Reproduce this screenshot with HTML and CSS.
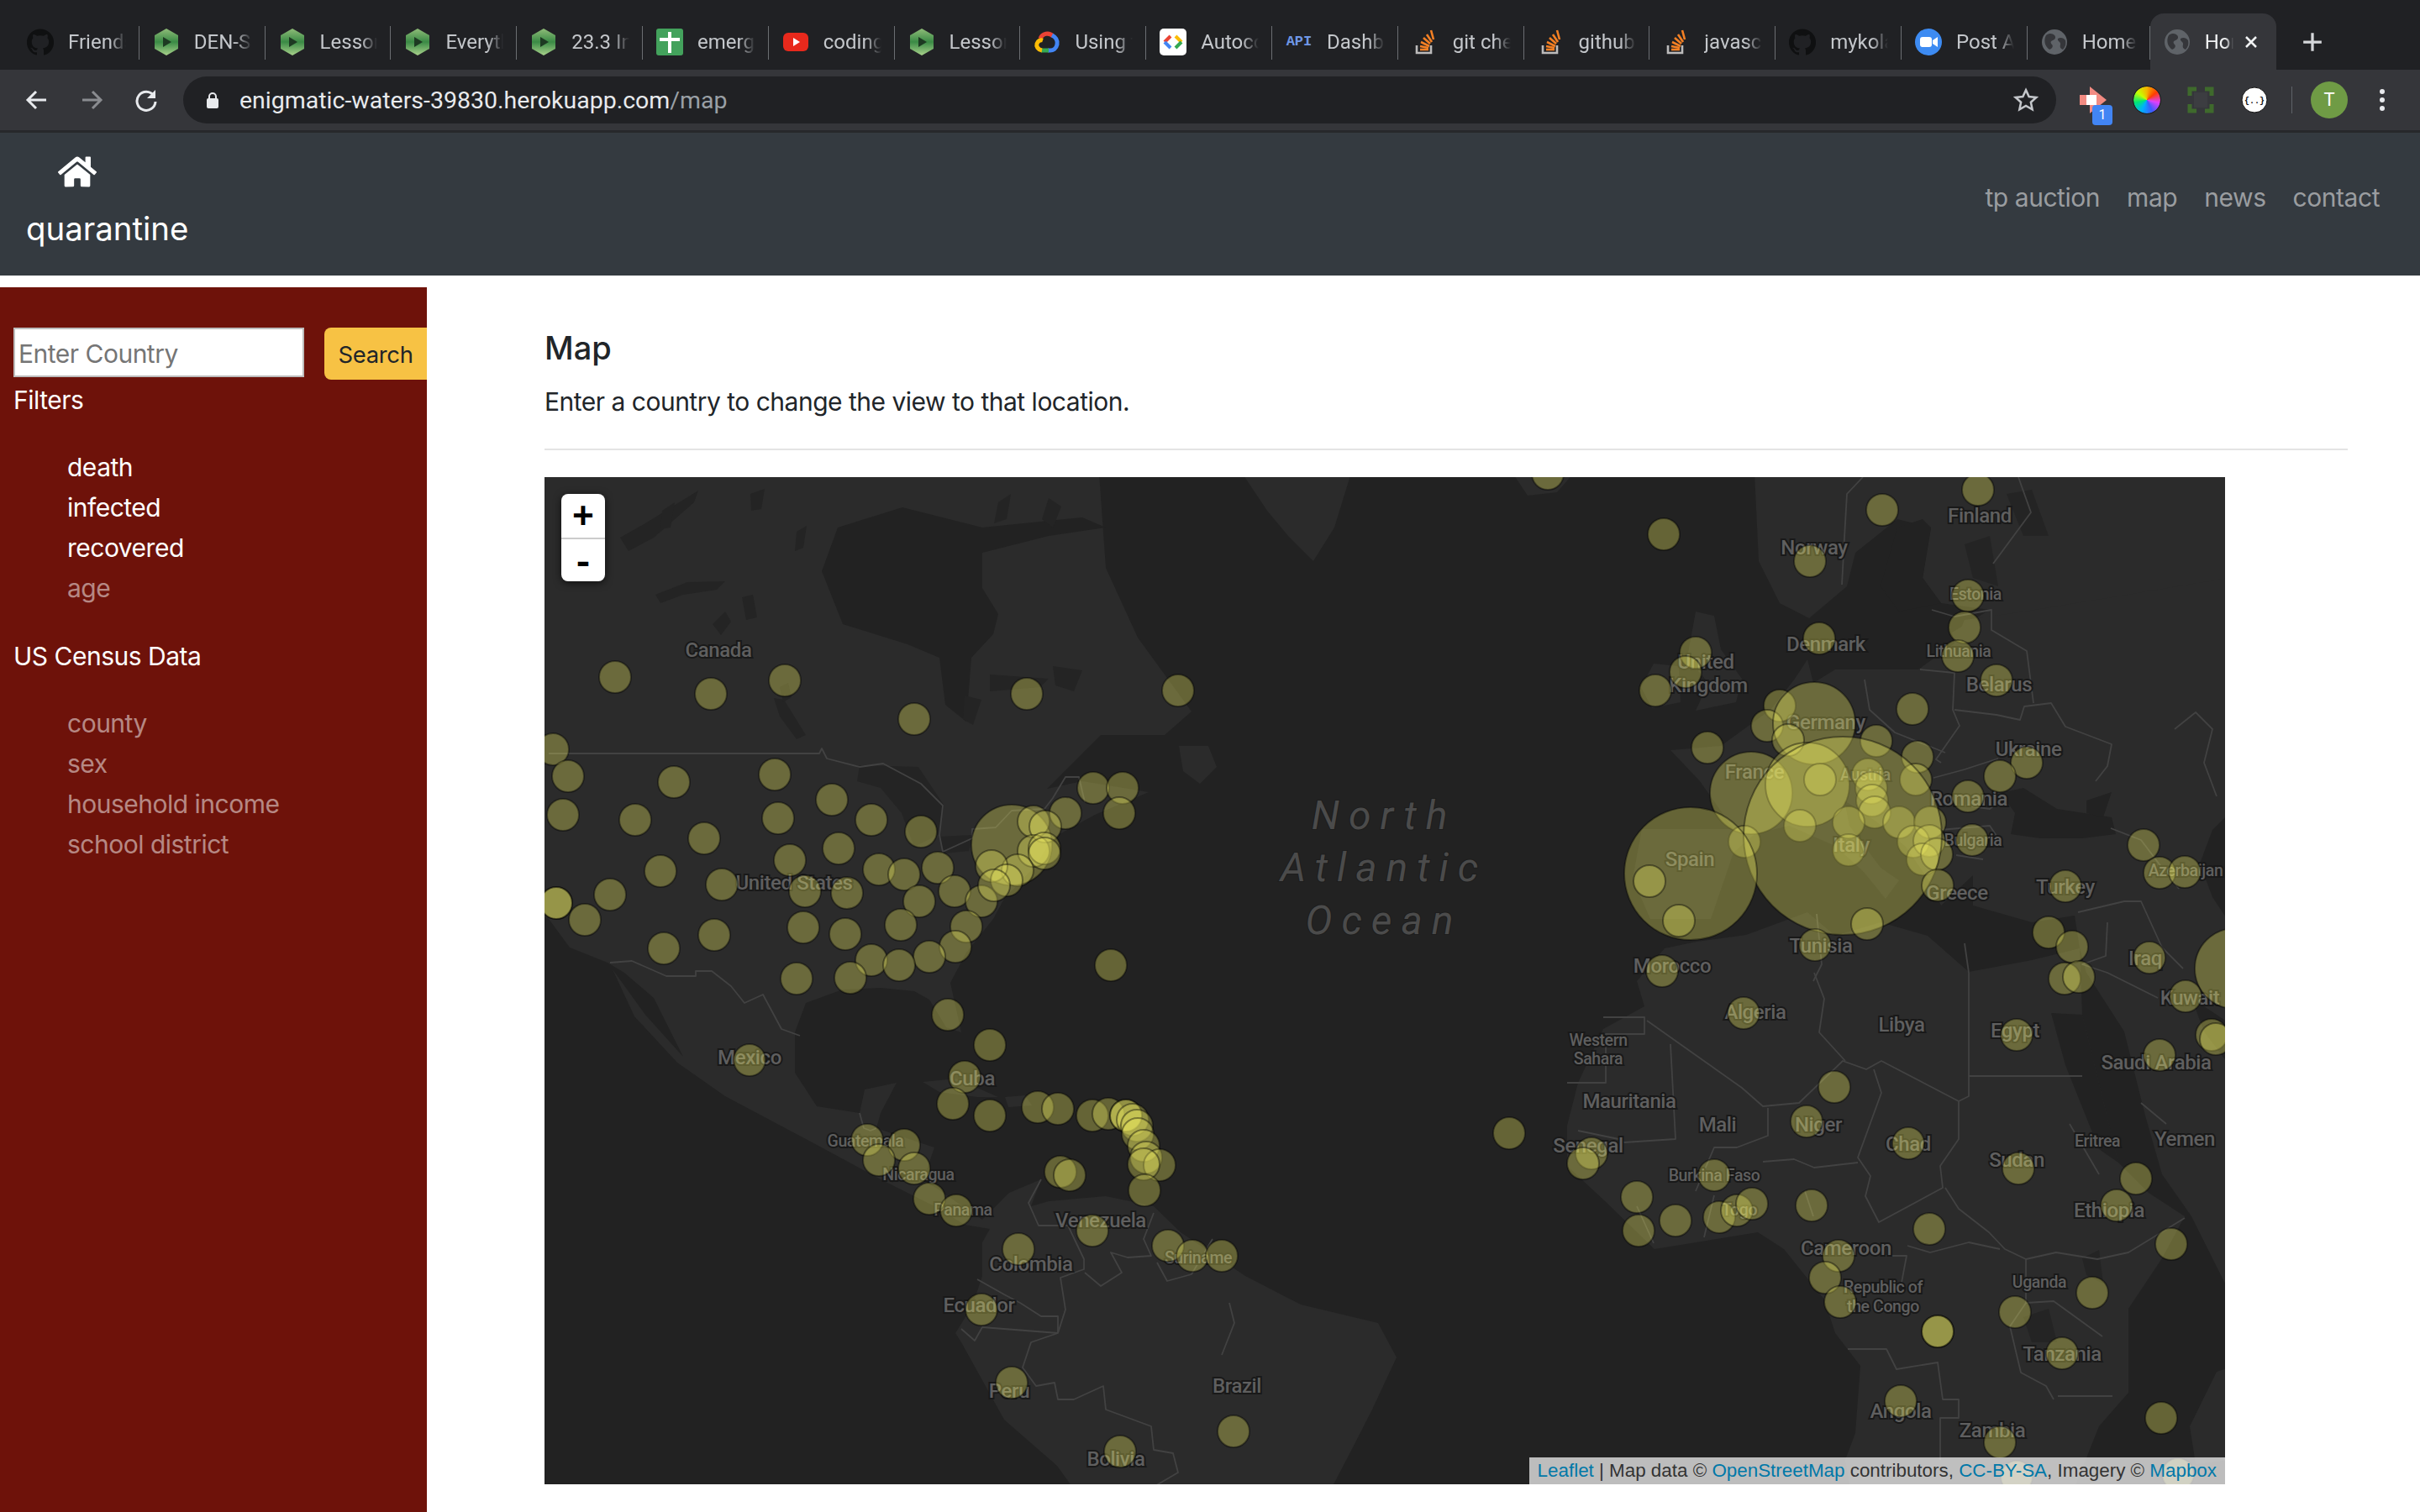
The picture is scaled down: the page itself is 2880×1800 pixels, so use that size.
FILE: index.html
```html
<!DOCTYPE html>
<html lang="en">
<head>
<meta charset="utf-8">
<title>Home</title>
<link rel="stylesheet" href="styles.css">
</head>
<body>
<svg class="defs" width="0" height="0">
  <defs>
    <linearGradient id="leaf" x1="0" y1="0" x2="0" y2="1">
      <stop offset="0" stop-color="#8fbc78"/><stop offset=".5" stop-color="#3a8a45"/><stop offset="1" stop-color="#a9d28c"/>
    </linearGradient>
    <symbol id="i-gh" viewBox="0 0 24 24"><path fill="#0f1011" d="M12 .3a12 12 0 0 0-3.8 23.4c.6.1.8-.3.8-.6v-2c-3.3.7-4-1.6-4-1.6-.6-1.4-1.4-1.8-1.4-1.8-1-.7.1-.7.1-.7 1.2 0 1.9 1.2 1.9 1.2 1 1.8 2.8 1.3 3.5 1 0-.8.4-1.3.7-1.6-2.7-.3-5.5-1.3-5.5-6 0-1.2.5-2.3 1.3-3.1-.2-.4-.6-1.6 0-3.2 0 0 1-.3 3.4 1.2a11.5 11.5 0 0 1 6 0c2.3-1.5 3.3-1.2 3.3-1.2.6 1.6.2 2.8 0 3.2.9.8 1.3 1.9 1.3 3.2 0 4.6-2.8 5.6-5.5 5.9.5.4.9 1 .9 2.2v3.3c0 .3.1.7.8.6A12 12 0 0 0 12 .3"/></symbol>
    <symbol id="i-hex" viewBox="0 0 32 32"><path fill="url(#leaf)" d="M16 0 30 8v16l-14 8-14-8V8z"/><path fill="#1d3a22" d="M12 10l10 6-10 6z"/></symbol>
    <symbol id="i-sheet" viewBox="0 0 32 32"><rect x="0" width="32" height="32" rx="3" fill="#43a25c"/><path fill="#fff" d="M14 4h4v7h10v4H18v14h-4V15H4v-4h10z"/></symbol>
    <symbol id="i-yt" viewBox="0 0 32 32"><rect x="1" y="5" width="30" height="22" rx="6" fill="#e8291c"/><path fill="#fff" d="M13 11l8 5-8 5z"/></symbol>
    <symbol id="i-gc" viewBox="0 0 32 32"><g fill="none" stroke-width="5"><path stroke="#ea4335" d="M8 12a9 9 0 0 1 15-3"/><path stroke="#4285f4" d="M22 8c4 2 7 6 6 11s-5 7-8 7h-3"/><path stroke="#34a853" d="M18 26H9"/><path stroke="#fbbc05" d="M10 26c-5-1-7-5-6-8s4-5 7-4"/></g></symbol>
    <symbol id="i-auto" viewBox="0 0 32 32"><rect width="32" height="32" rx="5" fill="#fff"/><path fill="none" stroke-width="4" stroke="#ea4335" d="M13 9l-7 7"/><path fill="none" stroke-width="4" stroke="#4285f4" d="M6 16l7 7"/><path fill="none" stroke-width="4" stroke="#fbbc05" d="M19 9l7 7"/><path fill="none" stroke-width="4" stroke="#34a853" d="M26 16l-7 7"/></symbol>
    <symbol id="i-so" viewBox="0 0 32 32"><path fill="none" stroke="#bcbbbb" stroke-width="2.6" d="M6 20v9h17v-9"/><g fill="none" stroke="#f48024" stroke-width="2.6"><path d="M10 25h10"/><path d="M10 21l10 2"/><path d="M11 16l10 5"/><path d="M14 11l8 7"/><path d="M18 7l6 9"/><path d="M23 2l3 11"/></g></symbol>
    <symbol id="i-zoom" viewBox="0 0 32 32"><circle cx="16" cy="16" r="16" fill="#3d8bf2"/><rect x="6" y="10" width="14" height="12" rx="3" fill="#fff"/><path fill="#fff" d="M21 14l6-4v12l-6-4z"/></symbol>
    <symbol id="i-globe" viewBox="0 0 32 32"><circle cx="16" cy="16" r="15" fill="#5f6368"/><path fill="#35363a" d="M6 8c4-3 8-2 10 0s1 5-2 6-3 3-1 5 0 5-3 6C4 21 3 13 6 8zm14 4c3-2 7-1 9 2 1 4 0 8-3 11-3-1-4-3-3-6s-4-4-3-7z"/></symbol>
    <symbol id="i-home" viewBox="0 0 576 512"><path fill="#fff" d="M280.37 148.26L96 300.11V464a16 16 0 0 0 16 16l112.06-.29a16 16 0 0 0 15.92-16V368a16 16 0 0 1 16-16h64a16 16 0 0 1 16 16v95.64a16 16 0 0 0 16 16.05L464 480a16 16 0 0 0 16-16V300L295.67 148.26a12.19 12.19 0 0 0-15.3 0zM571.6 251.47L488 182.56V44.05a12 12 0 0 0-12-12h-56a12 12 0 0 0-12 12v72.61L318.47 43a48 48 0 0 0-61 0L4.34 251.47a12 12 0 0 0-1.6 16.9l25.5 31A12 12 0 0 0 45.15 301l235.22-193.74a12.19 12.19 0 0 1 15.3 0L530.9 301a12 12 0 0 0 16.9-1.6l25.5-31a12 12 0 0 0-1.7-16.93z"/></symbol>
  </defs>
</svg>

<header class="chrome">
  <div class="tabs">
    <div class="tab"><svg class="fav"><use href="#i-gh"/></svg><span class="tab-title">Friends</span></div>
    <div class="tab"><svg class="fav"><use href="#i-hex"/></svg><span class="tab-title">DEN-SEI</span></div>
    <div class="tab"><svg class="fav"><use href="#i-hex"/></svg><span class="tab-title">Lessons</span></div>
    <div class="tab"><svg class="fav"><use href="#i-hex"/></svg><span class="tab-title">Everything</span></div>
    <div class="tab"><svg class="fav"><use href="#i-hex"/></svg><span class="tab-title">23.3 Intro</span></div>
    <div class="tab"><svg class="fav"><use href="#i-sheet"/></svg><span class="tab-title">emergency</span></div>
    <div class="tab"><svg class="fav"><use href="#i-yt"/></svg><span class="tab-title">coding tips</span></div>
    <div class="tab"><svg class="fav"><use href="#i-hex"/></svg><span class="tab-title">Lessons</span></div>
    <div class="tab"><svg class="fav"><use href="#i-gc"/></svg><span class="tab-title">Using the</span></div>
    <div class="tab"><svg class="fav"><use href="#i-auto"/></svg><span class="tab-title">Autocomplete</span></div>
    <div class="tab"><span class="fav fav-api">API</span><span class="tab-title">Dashboard</span></div>
    <div class="tab"><svg class="fav"><use href="#i-so"/></svg><span class="tab-title">git check</span></div>
    <div class="tab"><svg class="fav"><use href="#i-so"/></svg><span class="tab-title">github pull</span></div>
    <div class="tab"><svg class="fav"><use href="#i-so"/></svg><span class="tab-title">javascript</span></div>
    <div class="tab"><svg class="fav"><use href="#i-gh"/></svg><span class="tab-title">mykolaha</span></div>
    <div class="tab"><svg class="fav"><use href="#i-zoom"/></svg><span class="tab-title">Post Attendee</span></div>
    <div class="tab tab-short"><svg class="fav"><use href="#i-globe"/></svg><span class="tab-title">Home</span></div>
    <div class="tab tab-active"><svg class="fav"><use href="#i-globe"/></svg><span class="tab-title">Home</span>
      <svg class="tab-close" viewBox="0 0 16 16"><path d="M2 2l12 12M14 2L2 14"/></svg></div>
    <svg class="new-tab" viewBox="0 0 24 24"><path d="M12 2v20M2 12h20"/></svg>
  </div>
  <div class="toolbar">
    <svg class="tool tool-on" viewBox="0 0 28 28"><path d="M25 14H4M13 4L3 14l10 10"/></svg>
    <svg class="tool tool-off" viewBox="0 0 28 28"><path d="M3 14h21M15 4l10 10-10 10"/></svg>
    <svg class="tool tool-on" viewBox="0 0 28 28"><path d="M23 9a11 11 0 1 0 2 7"/><path class="solid" d="M25 2v10H15z"/></svg>
    <div class="omnibox">
      <svg class="lock" viewBox="0 0 16 20"><path fill="none" stroke="#e8eaed" stroke-width="2" d="M4 9V6a4 4 0 0 1 8 0v3"/><rect x="1" y="8" width="14" height="12" rx="2" fill="#e8eaed"/></svg>
      <span class="url">enigmatic-waters-39830.herokuapp.com<span class="url-path">/map</span></span>
      <svg class="star" viewBox="0 0 24 24"><path d="M12 2.5l2.9 6.3 6.9.8-5.1 4.6 1.4 6.8-6.1-3.4-6.1 3.4 1.4-6.8-5.1-4.6 6.9-.8z"/></svg>
    </div>
    <div class="exts">
      <span class="ext ext-flag"><svg viewBox="0 0 32 32"><path fill="#f28b82" d="M0 10h12V0l20 16-20 16V22H0z"/><rect x="8" y="10" width="12" height="12" fill="#fff"/></svg><b class="badge">1</b></span>
      <span class="ext ext-wheel"></span>
      <span class="ext"><svg viewBox="0 0 32 32"><path fill="none" stroke="#3f6a2c" stroke-width="5" d="M3 11V3h8M21 3h8v8M29 21v8h-8M11 29H3v-8"/><rect x="8" y="7" width="16" height="18" fill="#3c3d41"/></svg></span>
      <span class="ext"><svg viewBox="0 0 32 32"><circle cx="16" cy="16" r="15" fill="#fff" stroke="#111"/><text class="ext-json" x="16" y="20" text-anchor="middle">{..}</text></svg></span>
      <span class="tool-sep"></span>
      <span class="avatar">T</span>
      <span class="dots"><i></i><i></i><i></i></span>
    </div>
  </div>
</header>

<nav class="navbar">
  <div class="brand">
    <svg class="brand-icon"><use href="#i-home"/></svg>
    <span class="brand-name">quarantine</span>
  </div>
  <ul class="nav-links">
    <li>tp auction</li><li>map</li><li>news</li><li>contact</li>
  </ul>
</nav>

<div class="layout">
  <aside class="sidebar">
    <form class="search">
      <input class="search-input" type="text" placeholder="Enter Country">
      <button class="search-btn" type="button">Search</button>
    </form>
    <h2 class="side-head">Filters</h2>
    <ul class="side-list">
      <li class="on">death</li><li class="on">infected</li><li class="on">recovered</li><li>age</li>
    </ul>
    <h2 class="side-head side-head-2">US Census Data</h2>
    <ul class="side-list">
      <li>county</li><li>sex</li><li>household income</li><li>school district</li>
    </ul>
  </aside>
  <main class="content">
    <h1 class="title">Map</h1>
    <p class="lead">Enter a country to change the view to that location.</p>
    <hr class="rule">
    <div class="map">
      <svg class="map-svg" viewBox="0 0 2000 1200">
        <rect width="2000" height="1200" fill="#222222"/>
        <g class="land">
          <path d="M-5-5H660L668 108 706 191 770 279 738 307 662 307 598 371 640 362 719 375 655 402 604 430 585 462 547 502 534 526 502 566 483 602 496 661 478 655 458 622 440 612 400 608 355 610 311 626 298 661 298 709 324 749 375 757 381 729 419 721 400 757 395 775 464 798 451 836 521 884 553 852 591 836 579 868 600 862 668 856 725 868 757 899 834 951 900 985 992 1007 1014 1048 985 1110 961 1157 936 1205H630L610 1177 547 1122 496 1030 489 1019 509 987 521 951 521 911 530 895 500 890 464 868 400 836 311 788 215 737 158 697 107 642 81 586 120 640 165 690 130 620 95 590 75 578 30 560 5 526-5 520Z"/>
          <path d="M830-5H960L940 60 915 100 885 70 860 40Z"/>
          <path d="M755 320 790 320 800 345 780 365 760 350Z"/>
          <path d="M450 720 490 716 540 738 515 738 470 732Z"/>
          <path d="M548 738 572 736 580 748 552 750Z"/>
          <path d="M1152-5H1225L1205 18 1170 22Z"/>
          <path d="M1370 160 1392 165 1400 205 1425 240 1418 268 1370 278 1385 245 1360 215Z"/>
          <path d="M1320 222 1350 225 1352 268 1318 275 1305 250Z"/>
          <path d="M1440-5H1610V50 L1560 90 1550 130 1505 168 1470 150 1445 100Z"/>
          <path d="M1610-5H2005V300L1770 240 1680 205 1675 185 1720 158 1662 150 1640 120 1650 60 1610 50Z"/>
          <path d="M1306 419 1415 419 1375 362 1340 325 1400 320 1459 277 1488 240 1503 217 1510 245 1536 229 1635 229 1678 198 1690 170 1762 160 2005 120V1000L2000 960 1960 880 1925 830 1905 760 1880 660 1835 590 1827 561 1821 522 1770 530 1700 510 1700 474 1662 510 1646 478 1620 440 1585 410 1547 385 1553 415 1590 465 1612 480 1596 502 1570 470 1536 439 1481 415 1440 425 1415 447 1388 526 1316 526 1295 478Z"/>
          <path d="M1300 600 1333 561 1371 553 1430 545 1503 518 1536 546 1590 530 1646 546 1695 589 1770 575 1827 561 1830 640 1873 816 1909 852 1952 880 1925 930 1885 990 1885 1090 1850 1130 1820 1205H1554L1548 1170 1560 1138 1566 1058 1536 1019 1523 979 1475 919 1444 899 1321 919 1260 860 1217 820 1217 772 1230 721 1260 657 1309 630Z"/>
          <path d="M1990 1065 2005 1060V1170L1965 1175 1958 1130Z"/>
        </g>
        <g class="water">
          <path d="M349 60 426 36 521 60 640 48 668 60 600 70 521 90 521 132 540 163 534 187 508 215 502 291 477 271 470 215 432 199 355 175 330 112Z"/>
          <path d="M1733 376 1760 370 1800 395 1865 405 1870 425 1830 430 1780 430 1745 425 1750 400Z"/>
          <path d="M1835 385 1865 375 1855 405 1835 400Z"/>
          <path d="M1793 638 1830 640 1873 816 1850 800 1810 700Z"/>
          <path d="M1640 50 1650 60 1640 120 1662 150 1612 160 1590 130 1610 60Z"/>
          <path d="M1985 420 2005 400V530L1985 500 1970 460Z"/>
          <path d="M1960 620 2005 650V700L1975 660Z"/>
        </g>
        <g class="lakes">
          <path d="M90 72 120 55 183 16 178 30 130 72 100 88Z"/>
          <path d="M132 140 170 125 215 124 205 134 165 140 138 150Z"/>
          <path d="M235 143 248 140 253 167 240 170Z"/>
          <path d="M273 263 285 265 311 307 300 312 280 285Z"/>
          <path d="M140 40 155 30 150 60 138 62Z"/>
          <path d="M245 20 262 14 258 38 246 40Z"/>
          <path d="M300 65 312 58 308 84 298 88Z"/>
          <path d="M200 175 215 160 222 172 210 188Z"/>
          <path d="M280 250 290 245 294 262 284 268Z"/>
          <path d="M375 343 445 345 475 390 470 425 440 440 425 400 400 370 372 362Z"/>
          <path d="M470 428 510 426 505 445 475 448Z"/>
          <path d="M530 235 600 240 590 250 530 255Z"/>
          <path d="M605 225 640 230 630 255 608 248Z"/>
          <path d="M500 260 520 265 510 295 498 288Z"/>
          <path d="M540 30 555 20 550 50 535 55Z"/>
          <path d="M600 25 615 35 605 60 592 50Z"/>
          <path d="M1760 1000 1790 990 1800 1030 1770 1030Z"/>
          <path d="M1690 80 1720 70 1730 130 1700 120Z"/>
          <path d="M1740 20 1770 15 1790 70 1760 70Z"/>
          <path d="M1830 930 1850 920 1855 960 1835 950Z"/>
        </g>
        <g class="borders">
          <path d="M5 329H327L330 323 336 335 375 345 403 341 448 365 474 391 470 426 474 446 509 430 509 419 537 417 556 397 595 395 605 382 620 357 636 357 643 387"/>
          <path d="M78 578 104 576 145 594 180 594 180 588 199 588 222 606 238 626 260 616 282 657 304 665"/>
          <path d="M375 757 380 775 388 778 395 775"/>
          <path d="M591 836 576 864 588 891 623 891 642 931 642 943 614 953 620 991 611 1019 579 1030 569 1060 585 1082 607 1078 611 1098 630 1098 665 1082 668 1110 722 1130 725 1158 748 1162 754 1185 725 1202"/>
          <path d="M515 955 547 973 566 983 591 999 611 999 611 1019"/>
          <path d="M496 1014 512 1028 521 1012 611 1019"/>
          <path d="M725 876 713 907 722 927 694 929 674 923 687 947 662 963 643 947"/>
          <path d="M729 935 741 957 770 949 795 907"/>
          <path d="M815 983 821 1007 806 1045"/>
          <path d="M1260 643H1309V663H1263V721H1217"/>
          <path d="M1312 647 1425 727 1450 749 1493 745 1545 695 1573 705 1591 695 1683 743 1695 737V590"/>
          <path d="M1548 695 1517 661 1523 621 1511 590"/>
          <path d="M1695 713H1830"/>
          <path d="M1340 675 1346 788 1285 792 1278 788 1230 778"/>
          <path d="M1456 751V784L1419 798 1392 798 1370 850"/>
          <path d="M1450 815 1487 812 1511 822 1563 816"/>
          <path d="M1582 705 1591 733 1563 810 1578 832 1572 856 1588 887 1664 846 1661 820 1683 788 1683 743"/>
          <path d="M1667 846 1683 871 1719 899 1738 919 1763 931 1799 923 1848 931 1885 923 1952 882"/>
          <path d="M1590 927H1621L1615 959M1622 915 1649 923 1695 911 1732 919"/>
          <path d="M1763 931V983L1744 1011 1757 1066 1787 1082 1796 1098"/>
          <path d="M1763 983 1796 981 1854 1023"/>
          <path d="M1801 1094H1866"/>
          <path d="M1551 1038H1597L1609 1062 1658 1054 1664 1098H1683V1120H1661V1170"/>
          <path d="M1510 880 1500 850M1392 855 1380 905M1300 868 1320 912"/>
          <path d="M1815 770 1850 830M1900 745 1930 770"/>
          <path d="M1569 0 1550 20 1547 72 1544 128"/>
          <path d="M1754 0 1769 42 1724 103"/>
          <path d="M1651 158 1678 166 1722 158 1722 182 1764 207 1772 269"/>
          <path d="M1571 241 1577 277 1607 304 1667 328"/>
          <path d="M1637 229 1678 233 1676 277 1684 296 1656 336 1662 340"/>
          <path d="M1678 277 1728 283 1756 289 1761 273 1793 269 1810 297 1865 318 1860 344 1846 362"/>
          <path d="M1653 358 1690 348 1730 335M1650 385 1720 395 1740 380"/>
          <path d="M1660 420 1720 415 1730 430M1680 450 1712 455"/>
          <path d="M1864 418 1900 432 1925 465 1945 490"/>
          <path d="M1825 518 1880 505 1900 505 1925 560 1950 585"/>
          <path d="M1860 530 1858 570 1830 580 1860 590 1920 620"/>
          <path d="M1940 300 1965 280 1985 300 1975 340 1990 380"/>
          <path d="M1514 520 1520 580 1510 600M1690 555 1695 590"/>
        </g>
        <g class="labels">
          <text x="207" y="214">Canada</text>
          <text x="297" y="491">United States</text>
          <text x="1708" y="54">Finland</text>
          <text x="1511" y="92">Norway</text>
          <text class="s" x="1703" y="146">Estonia</text>
          <text x="1525" y="207">Denmark</text>
          <text x="1382" y="228">United</text>
          <text x="1385" y="256">Kingdom</text>
          <text class="s" x="1683" y="214">Lithuania</text>
          <text x="1731" y="255">Belarus</text>
          <text x="1525" y="300">Germany</text>
          <text x="1766" y="332">Ukraine</text>
          <text x="1440" y="359">France</text>
          <text class="s" x="1572" y="361">Austria</text>
          <text x="1695" y="391">Romania</text>
          <text class="s" x="1700" y="439">Bulgaria</text>
          <text x="1555" y="446">Italy</text>
          <text x="1363" y="463">Spain</text>
          <text x="1681" y="503">Greece</text>
          <text x="1810" y="496">Turkey</text>
          <text class="s" x="1953" y="475">Azerbaijan</text>
          <text x="1519" y="566">Tunisia</text>
          <text x="1342" y="590">Morocco</text>
          <text x="1905" y="581">Iraq</text>
          <text x="244" y="699">Mexico</text>
          <text x="509" y="724">Cuba</text>
          <text class="s" x="382" y="797">Guatemala</text>
          <text class="s" x="445" y="837">Nicaragua</text>
          <text class="s" x="498" y="879">Panama</text>
          <text x="662" y="893">Venezuela</text>
          <text x="579" y="945">Colombia</text>
          <text class="s" x="778" y="936">Suriname</text>
          <text x="517" y="994">Ecuador</text>
          <text x="553" y="1096">Peru</text>
          <text x="824" y="1090">Brazil</text>
          <text x="680" y="1177">Bolivia</text>
          <text x="1441" y="645">Algeria</text>
          <text x="1615" y="660">Libya</text>
          <text x="1750" y="667">Egypt</text>
          <text x="1958" y="628">Kuwait</text>
          <text class="s" x="1254" y="677">Western</text>
          <text class="s" x="1254" y="699">Sahara</text>
          <text x="1918" y="705">Saudi Arabia</text>
          <text x="1291" y="751">Mauritania</text>
          <text x="1396" y="779">Mali</text>
          <text x="1516" y="779">Niger</text>
          <text x="1242" y="804">Senegal</text>
          <text x="1623" y="802">Chad</text>
          <text x="1752" y="821">Sudan</text>
          <text class="s" x="1392" y="838">Burkina Faso</text>
          <text class="s" x="1848" y="797">Eritrea</text>
          <text x="1952" y="796">Yemen</text>
          <text class="s" x="1422" y="879">Togo</text>
          <text x="1862" y="881">Ethiopia</text>
          <text x="1549" y="926">Cameroon</text>
          <text class="s" x="1593" y="971">Republic of</text>
          <text class="s" x="1593" y="994">the Congo</text>
          <text class="s" x="1779" y="965">Uganda</text>
          <text x="1806" y="1052">Tanzania</text>
          <text x="1614" y="1120">Angola</text>
          <text x="1723" y="1143">Zambia</text>
          <text class="sea" x="999" y="419">North</text>
          <text class="sea" x="999" y="481">Atlantic</text>
          <text class="sea" x="999" y="544">Ocean</text>
        </g>
        <g class="dots">
          <circle cx="84" cy="238" r="19"/><circle cx="198" cy="258" r="19"/><circle cx="286" cy="242" r="19"/><circle cx="440" cy="288" r="19"/><circle cx="574" cy="258" r="19"/><circle cx="754" cy="254" r="19"/>
          <circle cx="10" cy="324" r="19"/><circle cx="28" cy="356" r="19"/><circle cx="154" cy="363" r="19"/><circle cx="274" cy="354" r="19"/><circle cx="342" cy="384" r="19"/><circle cx="22" cy="402" r="19"/>
          <circle cx="108" cy="408" r="19"/><circle cx="278" cy="406" r="19"/><circle cx="389" cy="408" r="19"/><circle cx="448" cy="422" r="19"/><circle cx="190" cy="430" r="19"/><circle cx="350" cy="442" r="19"/>
          <circle cx="292" cy="456" r="19"/><circle cx="398" cy="467" r="19"/><circle cx="428" cy="473" r="19"/><circle cx="468" cy="465" r="19"/><circle cx="138" cy="469" r="19"/><circle cx="211" cy="485" r="19"/>
          <circle cx="78" cy="497" r="19"/><circle cx="14" cy="507" r="19"/><circle cx="14" cy="507" r="19"/><circle cx="48" cy="527" r="19"/><circle cx="310" cy="493" r="19"/><circle cx="360" cy="495" r="19"/>
          <circle cx="488" cy="493" r="19"/><circle cx="446" cy="505" r="19"/><circle cx="520" cy="505" r="19"/><circle cx="308" cy="536" r="19"/><circle cx="358" cy="544" r="19"/><circle cx="424" cy="533" r="19"/>
          <circle cx="502" cy="535" r="19"/><circle cx="202" cy="545" r="19"/><circle cx="142" cy="561" r="19"/><circle cx="489" cy="559" r="19"/><circle cx="458" cy="571" r="19"/><circle cx="389" cy="575" r="19"/>
          <circle cx="422" cy="581" r="19"/><circle cx="300" cy="597" r="19"/><circle cx="364" cy="596" r="19"/><circle cx="674" cy="581" r="19"/><circle cx="620" cy="400" r="19"/><circle cx="653" cy="370" r="19"/>
          <circle cx="688" cy="370" r="19"/><circle cx="684" cy="400" r="19"/>
          <circle cx="556" cy="438" r="48"/><circle cx="582" cy="410" r="19"/><circle cx="596" cy="416" r="19"/><circle cx="582" cy="445" r="19"/><circle cx="595" cy="442" r="19"/><circle cx="595" cy="448" r="19"/><circle cx="563" cy="468" r="19"/><circle cx="532" cy="463" r="19"/><circle cx="550" cy="480" r="19"/><circle cx="535" cy="486" r="19"/>

          <circle cx="1194" cy="-4" r="19"/><circle cx="1706" cy="15" r="19"/><circle cx="1592" cy="39" r="19"/><circle cx="1332" cy="68" r="19"/><circle cx="1506" cy="100" r="19"/><circle cx="1694" cy="141" r="19"/>
          <circle cx="1690" cy="179" r="19"/><circle cx="1682" cy="213" r="19"/><circle cx="1517" cy="192" r="19"/><circle cx="1370" cy="209" r="19"/><circle cx="1358" cy="232" r="19"/><circle cx="1322" cy="254" r="19"/>
          <circle cx="1728" cy="242" r="19"/><circle cx="1628" cy="276" r="19"/><circle cx="1470" cy="272" r="19"/><circle cx="1455" cy="296" r="19"/><circle cx="1511" cy="293" r="49"/><circle cx="1480" cy="313" r="19"/>
          <circle cx="1585" cy="314" r="19"/><circle cx="1634" cy="333" r="19"/><circle cx="1764" cy="340" r="19"/><circle cx="1732" cy="356" r="19"/><circle cx="1384" cy="322" r="19"/><circle cx="1632" cy="360" r="19"/>
          <circle cx="1694" cy="380" r="19"/><circle cx="1436" cy="376" r="49"/><circle cx="1503" cy="366" r="50"/><circle cx="1518" cy="360" r="19"/><circle cx="1575" cy="354" r="19"/><circle cx="1579" cy="370" r="19"/>
          <circle cx="1580" cy="385" r="19"/><circle cx="1583" cy="399" r="19"/><circle cx="1552" cy="411" r="19"/><circle cx="1612" cy="411" r="19"/><circle cx="1649" cy="411" r="19"/><circle cx="1494" cy="415" r="19"/>
          <circle cx="1629" cy="434" r="19"/><circle cx="1648" cy="433" r="19"/><circle cx="1428" cy="434" r="19"/><circle cx="1552" cy="444" r="19"/><circle cx="1699" cy="432" r="19"/><circle cx="1640" cy="455" r="19"/>
          <circle cx="1657" cy="449" r="19"/><circle cx="1545" cy="427" r="118"/><circle cx="1364" cy="472" r="79"/><circle cx="1315" cy="481" r="19"/><circle cx="1350" cy="528" r="19"/><circle cx="1574" cy="532" r="19"/>
          <circle cx="1658" cy="486" r="19"/><circle cx="1810" cy="487" r="19"/><circle cx="1903" cy="438" r="19"/><circle cx="1922" cy="471" r="19"/><circle cx="1952" cy="470" r="19"/><circle cx="1512" cy="557" r="19"/>
          <circle cx="1330" cy="588" r="19"/><circle cx="1790" cy="542" r="19"/><circle cx="1818" cy="559" r="19"/><circle cx="1809" cy="597" r="19"/><circle cx="1826" cy="595" r="19"/><circle cx="1910" cy="572" r="19"/>
          <circle cx="2012" cy="585" r="48"/><circle cx="1953" cy="618" r="19"/>

          <circle cx="480" cy="640" r="19"/><circle cx="530" cy="676" r="19"/><circle cx="244" cy="694" r="19"/><circle cx="500" cy="714" r="19"/><circle cx="486" cy="746" r="19"/><circle cx="530" cy="760" r="19"/>
          <circle cx="587" cy="750" r="19"/><circle cx="611" cy="752" r="19"/><circle cx="652" cy="760" r="19"/><circle cx="671" cy="758" r="19"/><circle cx="692" cy="760" r="19"/><circle cx="692" cy="760" r="19"/><circle cx="700" cy="765" r="19"/><circle cx="705" cy="772" r="19"/>
          <circle cx="706" cy="782" r="19"/><circle cx="713" cy="796" r="19"/><circle cx="716" cy="810" r="19"/><circle cx="732" cy="819" r="19"/><circle cx="713" cy="818" r="19"/><circle cx="714" cy="849" r="19"/>
          <circle cx="384" cy="789" r="19"/><circle cx="428" cy="795" r="19"/><circle cx="398" cy="813" r="19"/><circle cx="440" cy="823" r="19"/><circle cx="458" cy="859" r="19"/><circle cx="490" cy="873" r="19"/>
          <circle cx="614" cy="827" r="19"/><circle cx="625" cy="831" r="19"/><circle cx="652" cy="897" r="19"/><circle cx="564" cy="919" r="19"/><circle cx="742" cy="915" r="19"/><circle cx="771" cy="927" r="19"/>
          <circle cx="806" cy="927" r="19"/><circle cx="520" cy="991" r="19"/><circle cx="556" cy="1078" r="19"/><circle cx="685" cy="1160" r="19"/><circle cx="820" cy="1136" r="19"/>

          <circle cx="1148" cy="781" r="19"/><circle cx="1246" cy="805" r="19"/><circle cx="1236" cy="817" r="19"/><circle cx="1392" cy="831" r="19"/><circle cx="1300" cy="857" r="19"/>
          <circle cx="1302" cy="897" r="19"/><circle cx="1346" cy="885" r="19"/><circle cx="1398" cy="881" r="19"/><circle cx="1419" cy="873" r="19"/><circle cx="1437" cy="865" r="19"/><circle cx="1508" cy="867" r="19"/>
          <circle cx="1535" cy="726" r="19"/><circle cx="1502" cy="767" r="19"/><circle cx="1623" cy="793" r="19"/><circle cx="1754" cy="823" r="19"/><circle cx="1648" cy="895" r="19"/><circle cx="1540" cy="927" r="19"/>
          <circle cx="1524" cy="953" r="19"/><circle cx="1542" cy="982" r="19"/><circle cx="1658" cy="1017" r="19"/><circle cx="1658" cy="1017" r="19"/><circle cx="1750" cy="994" r="19"/><circle cx="1842" cy="971" r="19"/>
          <circle cx="1806" cy="1043" r="19"/><circle cx="1614" cy="1100" r="19"/><circle cx="1732" cy="1149" r="19"/><circle cx="1924" cy="1120" r="19"/><circle cx="1894" cy="835" r="19"/><circle cx="1871" cy="867" r="19"/>
          <circle cx="1936" cy="913" r="19"/><circle cx="1427" cy="638" r="19"/><circle cx="1752" cy="664" r="19"/><circle cx="1922" cy="688" r="19"/><circle cx="1984" cy="664" r="19"/><circle cx="1989" cy="669" r="19"/>
          <circle cx="1944" cy="1187" r="19"/><circle cx="1752" cy="1190" r="19"/>
        </g>
      </svg>
      <div class="zoom-ctl">
        <span class="zoom-btn">+</span>
        <span class="zoom-btn">-</span>
      </div>
      <div class="attribution"><a>Leaflet</a> | Map data © <a>OpenStreetMap</a> contributors, <a>CC-BY-SA</a>, Imagery © <a>Mapbox</a></div>
    </div>
  </main>
</div>
</body>
</html>
```
FILE: styles.css
```css
* { box-sizing: border-box; }
html, body { margin: 0; padding: 0; }
body {
  width: 2880px;
  height: 1800px;
  overflow: hidden;
  background: #fff;
  color: #212529;
  font-family: Inter, "Liberation Sans", sans-serif;
  display: flex;
  flex-direction: column;
}
.defs { position: absolute; }

/* browser chrome */
.chrome { background: #202124; flex: none; }
.tabs {
  height: 83px;
  padding: 16px 0 0 16px;
  display: flex;
  align-items: flex-start;
}
.tab {
  position: relative;
  flex: none;
  width: 149.8px;
  height: 67px;
  padding-left: 16px;
  display: flex;
  align-items: center;
  gap: 17px;
}
.tab-short { width: 146px; }
.tab::after {
  content: "";
  position: absolute;
  right: 0;
  top: 15px;
  height: 40px;
  width: 1px;
  background: #6b6e72;
}
.fav { width: 32px; height: 32px; flex: none; }
.fav-api {
  font: bold 17px "Liberation Mono", monospace;
  color: #6f97e6;
  line-height: 32px;
  text-align: center;
}
.tab-title {
  flex: 1;
  min-width: 0;
  margin-right: 16px;
  overflow: hidden;
  white-space: nowrap;
  font: 24px Roboto, sans-serif;
  color: #c4c7cb;
  -webkit-mask-image: linear-gradient(90deg, #000 72%, transparent);
  mask-image: linear-gradient(90deg, #000 72%, transparent);
}
.tab-active {
  background: #35363a;
  border-radius: 16px 16px 0 0;
}
.tab-active::after { display: none; }
.tab-active .tab-title { color: #f1f3f4; margin-right: 4px; flex: 0 0 34px; }
.tab-close {
  width: 16px;
  height: 16px;
  fill: none;
  stroke: #f1f3f4;
  stroke-width: 2.5;
  margin-left: -8px;
}
.new-tab {
  width: 26px;
  height: 26px;
  margin: 21px 0 0 30px;
  fill: none;
  stroke: #d5d7da;
  stroke-width: 3;
}
.toolbar {
  height: 75px;
  background: #35363a;
  border-bottom: 3px solid #27282b;
  padding: 9px 0 10px 30px;
  display: flex;
  align-items: center;
}
.tool {
  width: 28px;
  height: 28px;
  flex: none;
  margin-right: 37px;
  fill: none;
  stroke-width: 3;
}
.tool-on { stroke: #e8eaed; }
.tool-off { stroke: #8a8c90; }
.tool .solid { fill: #e8eaed; stroke: none; }
.omnibox {
  margin-left: -7px;
  width: 2229px;
  height: 56px;
  flex: none;
  background: #202124;
  border-radius: 28px;
  display: flex;
  align-items: center;
  padding: 0 21px 0 27px;
}
.lock { width: 16px; height: 22px; flex: none; }
.url {
  margin-left: 24px;
  padding-top: 2px;
  flex: 1;
  font: 28.5px Roboto, sans-serif;
  color: #e8eaed;
  white-space: nowrap;
}
.url-path { color: #9aa0a6; }
.star { width: 30px; height: 30px; fill: none; stroke: #c4c7cb; stroke-width: 2; }
.exts { flex: 1; display: flex; align-items: center; padding-left: 28px; }
.ext { position: relative; width: 32px; height: 32px; margin-right: 32px; display: block; }
.ext svg { width: 32px; height: 32px; display: block; }
.ext-wheel {
  border-radius: 50%;
  background: conic-gradient(#f4b400, #ff3d00, #e040fb, #3d5afe, #00b0ff, #00e676, #c6ff00, #f4b400);
  outline: 1px solid #1c1c1c;
}
.ext-json { font: bold 10px "Liberation Mono", monospace; fill: #111; }
.badge {
  position: absolute;
  right: -7px;
  bottom: -14px;
  width: 24px;
  height: 24px;
  border-radius: 4px;
  background: #4285f4;
  color: #fff;
  font: 16px/24px Roboto, sans-serif;
  text-align: center;
}
.tool-sep { width: 1px; height: 32px; background: #5f6368; margin-right: 22px; margin-left: -4px; }
.avatar {
  width: 44px;
  height: 44px;
  border-radius: 50%;
  background: #6f9b45;
  color: #fff;
  font: 22px/44px Roboto, sans-serif;
  text-align: center;
  margin-right: 38px;
}
.dots { display: flex; flex-direction: column; gap: 4px; }
.dots i { width: 6px; height: 6px; border-radius: 50%; background: #e8eaed; display: block; }

/* site navbar */
.navbar {
  flex: none;
  height: 170px;
  background: #343a40;
  display: flex;
  align-items: center;
  justify-content: space-between;
  padding: 0 48px 0 31px;
}
.brand { display: flex; flex-direction: column; align-items: flex-start; padding-bottom: 8px; }
.brand-icon { width: 46px; height: 41px; margin: 0 0 25px 38px; display: block; }
.brand-name { font-size: 38.4px; line-height: 44px; color: #fff; }
.nav-links { list-style: none; display: flex; gap: 32px; margin: 0; padding: 0 0 16px; }
.nav-links li { font-size: 30px; letter-spacing: -.45px; color: #9a9da0; }

/* page */
.layout { flex: 1; min-height: 0; display: flex; }
.sidebar {
  flex: none;
  width: 508px;
  margin-top: 14px;
  padding: 48px 0 0 16px;
  background: #6e120a;
  color: #fff;
}
.search { display: flex; gap: 24px; align-items: flex-start; }
.search-input {
  width: 346px;
  height: 59px;
  padding: 2px 4px 0;
  border: 2px solid #bdbdbd;
  background: #fff;
  font: 30px Inter, sans-serif;
  letter-spacing: -.5px;
  color: #212529;
}
.search-input::placeholder { color: #757575; opacity: 1; }
.search-btn {
  width: 122px;
  height: 62px;
  padding: 2px 0 0;
  border: 0;
  border-radius: 8px 0 0 8px;
  background: #f7c244;
  color: #212529;
  font: 27.4px Inter, sans-serif;
  letter-spacing: -.3px;
}
.side-head { margin: 4px 0 0; font-size: 30px; font-weight: 400; line-height: 40px; letter-spacing: -.5px; }
.side-head-2 { margin-top: 37px; }
.side-list { list-style: none; margin: 36px 0 0; padding: 0 0 0 64px; }
.side-list li { font-size: 30px; line-height: 48px; letter-spacing: -.5px; color: rgba(255,255,255,.5); }
.side-list li.on { color: #fff; }

.content { flex: 1; min-width: 0; padding: 0 86px 0 140px; }
.title { margin: 63px 0 0; font-size: 38px; font-weight: 500; line-height: 46px; }
.lead { margin: 20px 0 0; font-size: 30px; line-height: 42px; letter-spacing: -.5px; }
.rule { margin: 35px 0 0; border: 0; border-top: 2px solid #e4e4e4; }
.map { position: relative; width: 2000px; height: 1199px; margin-top: 32px; overflow: hidden; background: #222; }
.map-svg { display: block; width: 2000px; height: 1200px; }
.land path { fill: #2b2b2b; }
.water path { fill: #222222; }
.lakes path { fill: #242424; }
.borders path { fill: none; stroke: #424242; stroke-width: 1.8; stroke-linejoin: round; }
.labels text {
  font: 500 24px Roboto, sans-serif;
  text-anchor: middle;
  fill: #5f5f5f;
  stroke: #191919;
  stroke-width: 4px;
  paint-order: stroke;
  letter-spacing: -.4px;
}
.labels text.s { font-size: 19.5px; }
.labels text.sea {
  font: italic 400 48px Roboto, sans-serif;
  letter-spacing: 11px;
  fill: #4b4b4b;
  stroke: #1d1d1d;
  stroke-width: 2px;
}
.dots circle {
  fill: #f0ee60;
  fill-opacity: .33;
  stroke: #000;
  stroke-opacity: .4;
  stroke-width: 2;
}
.zoom-ctl {
  position: absolute;
  left: 20px;
  top: 20px;
  width: 52px;
  border-radius: 8px;
  background: #fff;
  box-shadow: 0 2px 10px rgba(0,0,0,.65);
  overflow: hidden;
}
.zoom-btn {
  display: block;
  height: 52px;
  padding-top: 3px;
  text-align: center;
  font: bold 44px/52px "Liberation Mono", monospace;
  color: #000;
}
.zoom-btn + .zoom-btn { border-top: 2px solid #ccc; }
.attribution {
  position: absolute;
  right: 0;
  bottom: 0;
  height: 32px;
  padding: 0 10px;
  background: rgba(255,255,255,.7);
  color: #333;
  font: 22.4px/32px "Liberation Sans", sans-serif;
  white-space: nowrap;
}
.attribution a { color: #0078a8; }
```
